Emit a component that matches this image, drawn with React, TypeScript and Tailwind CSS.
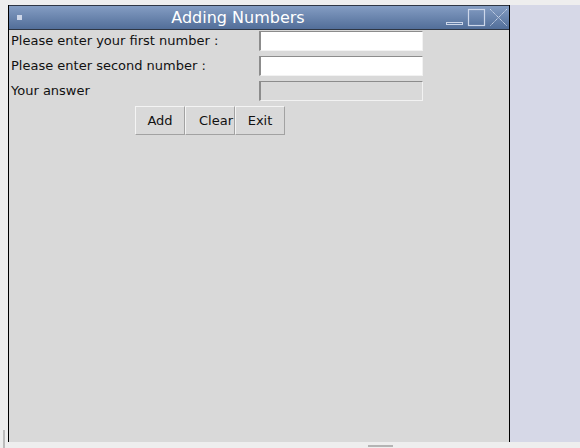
import React from 'react';

const font = { fontFamily: '"DejaVu Sans", Verdana, sans-serif' };

function TitleBar() {
  return (
    <div className="flex h-[25px] items-stretch border-t border-b border-[#2e3644] bg-gradient-to-b from-[#849dc3] to-[#526e99]">
      {/* window menu square */}
      <div className="flex w-[22px] items-center pl-[8px]">
        <div className="h-[5px] w-[5px] bg-[#cdd6e8]" />
      </div>
      <div className="flex flex-1 items-center justify-center text-[16px] leading-none text-white">
        Adding Numbers
      </div>
      {/* minimize / maximize / close */}
      <svg width="64" height="23" viewBox="0 0 64 23" className="self-center">
        <rect x="1.5" y="16.5" width="16" height="2" fill="none" stroke="#cdd7ea" strokeWidth="1" />
        <rect x="23.5" y="3.5" width="16" height="16" fill="none" stroke="#cdd7ea" strokeWidth="1.2" />
        <path d="M45 3 L62 20 M62 3 L45 20" stroke="#cdd7ea" strokeWidth="1" strokeDasharray="1.4 0.6" />
      </svg>
    </div>
  );
}

function Field({ editable = true }: { editable?: boolean }) {
  return (
    <div
      className={`h-[20px] w-[164px] border-t-[1px] border-l-[2px] border-b border-r border-t-[#8c8c8c] border-l-[#8c8c8c] border-b-[#f2f2f2] border-r-[#f2f2f2] ${
        editable ? 'bg-white' : 'bg-[#d9d9d9]'
      }`}
    />
  );
}

function Btn({ label, tight = false }: { label: string; tight?: boolean }) {
  return (
    <div
      className={`flex h-[29px] w-[50px] items-center overflow-hidden whitespace-nowrap border-t border-l border-b border-r border-t-[#f4f4f4] border-l-[#f4f4f4] border-b-[#a2a2a2] border-r-[#a2a2a2] bg-[#d9d9d9] text-[13px] text-[#111] ${
        tight ? 'justify-end pr-[1px]' : 'justify-center'
      }`}
    >
      {label}
    </div>
  );
}

export default function App() {
  const rows = [
    { label: 'Please enter your first number :', editable: true },
    { label: 'Please enter second number :', editable: true },
    { label: 'Your answer', editable: false },
  ];

  return (
    <div className="relative flex h-[448px] w-[580px] flex-col overflow-hidden bg-[#eeeeee]" style={font}>
      <div className="h-[5px]" />
      <div className="flex h-[437px]">
        <div className="w-[8px]" />
        <div className="flex w-[502px] flex-col border-l border-r border-black bg-[#d9d9d9]">
          <TitleBar />
          <div className="flex flex-col pt-[1px]">
            <div className="flex flex-col gap-[5px]">
              {rows.map((r) => (
                <div key={r.label} className="flex h-[20px] items-center">
                  <div className="w-[250px] pb-[1px] pl-[2px] text-[13px] leading-none text-[#111]">{r.label}</div>
                  <Field editable={r.editable} />
                </div>
              ))}
            </div>
            <div className="mt-[5px] flex pl-[126px]">
              <Btn label="Add" />
              <Btn label="Clear" tight />
              <Btn label="Exit" />
            </div>
          </div>
        </div>
        <div className="flex-1 bg-[#d6d8e7]" />
      </div>
      {/* bottom scroll strip */}
      <div className="flex h-[6px] items-center">
        <div className="ml-[368px] mt-[1px] h-[2px] w-[25px] bg-[#b4b4b4]" />
      </div>
      <div className="absolute left-[3px] top-[430px] h-[18px] w-[2px] bg-[#bcbcbc]" />
    </div>
  );
}
